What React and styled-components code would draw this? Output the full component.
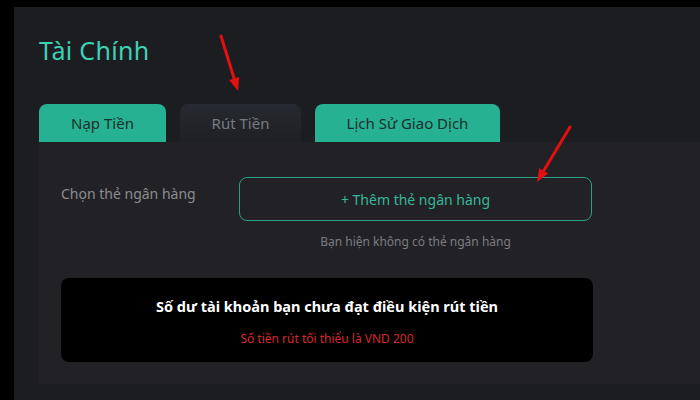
import React from "react"
import styled, { createGlobalStyle } from "styled-components"

const GlobalStyle = createGlobalStyle`
  html, body {
    margin: 0;
    padding: 0;
    background: #000;
  }
  body {
    font-family: "Noto Sans", "Open Sans", sans-serif;
  }
`

const Frame = styled.div`
  height: 400px;
  padding: 7px 0 0 14px;
  box-sizing: border-box;
  background: #000;
  overflow: hidden;
`

const Page = styled.div`
  position: relative;
  height: 100%;
  background: #1c1d21;
  padding: 27px 0 0 25px;
  box-sizing: border-box;
`

const Title = styled.h1`
  margin: 0;
  font-size: 25px;
  line-height: 32px;
  font-weight: 400;
  color: #3dd2b1;
  letter-spacing: 0.3px;
`

const Tabs = styled.div`
  display: flex;
  gap: 14px;
  margin-top: 38px;
`

const Tab = styled.div`
  width: ${(p) => p.$w}px;
  height: 38px;
  border-radius: 8px 8px 0 0;
  display: flex;
  align-items: center;
  justify-content: center;
  font-size: 15px;
  color: ${(p) => (p.$active ? "#777a7f" : "#1d2f2c")};
  background: ${(p) =>
    p.$active ? "linear-gradient(180deg, #262930 0%, #1f2024 100%)" : "#27b193"};
`

const Panel = styled.div`
  height: 242px;
  background: #222226;
  padding: 35px 0 0 22px;
  box-sizing: border-box;
`

const Row = styled.div`
  display: flex;
  align-items: flex-start;
`

const Label = styled.div`
  width: 178px;
  padding-top: 7px;
  font-size: 14px;
  color: #8b8c90;
`

const Field = styled.div`
  width: 353px;
  display: flex;
  flex-direction: column;
  align-items: center;
`

const AddButton = styled.button`
  width: 100%;
  height: 44px;
  border: 1.5px solid #2a9e86;
  border-radius: 8px;
  background: transparent;
  color: #36b899;
  font-family: inherit;
  font-size: 14px;
  cursor: pointer;
`

const Hint = styled.div`
  margin-top: 12px;
  font-size: 12px;
  color: #7c7d81;
`

const Notice = styled.div`
  width: 532px;
  height: 84px;
  margin-top: 28px;
  background: #000;
  border-radius: 8px;
  display: flex;
  flex-direction: column;
  align-items: center;
  padding-top: 17px;
  box-sizing: border-box;
`

const NoticeTitle = styled.div`
  font-size: 14.5px;
  font-weight: 700;
  color: #fff;
  line-height: 22px;
`

const NoticeSub = styled.div`
  margin-top: 13px;
  font-size: 12px;
  color: #d6282a;
`

const Arrow = styled.svg`
  position: absolute;
  left: ${(p) => p.$x}px;
  top: ${(p) => p.$y}px;
  overflow: visible;
`

const RedArrow = ({ x, y, x1, y1, x2, y2 }) => {
  const ang = Math.atan2(y2 - y1, x2 - x1)
  const len = 14
  const spread = 0.38
  const a = [x2 - len * Math.cos(ang - spread), y2 - len * Math.sin(ang - spread)]
  const b = [x2 - len * Math.cos(ang + spread), y2 - len * Math.sin(ang + spread)]
  const sx = x2 - (len - 3) * Math.cos(ang)
  const sy = y2 - (len - 3) * Math.sin(ang)
  return (
    <Arrow $x={x} $y={y} width="1" height="1">
      <line x1={x1} y1={y1} x2={sx} y2={sy} stroke="#e3100f" strokeWidth="3" strokeLinecap="round" />
      <polygon points={`${x2},${y2} ${a[0]},${a[1]} ${b[0]},${b[1]}`} fill="#e3100f" />
    </Arrow>
  )
}

export default function App() {
  return (
    <>
      <GlobalStyle />
      <Frame>
        <Page>
          <Title>Tài Chính</Title>
          <Tabs>
            <Tab $w={127}>Nạp Tiền</Tab>
            <Tab $w={121} $active>Rút Tiền</Tab>
            <Tab $w={185}>Lịch Sử Giao Dịch</Tab>
          </Tabs>
          <Panel>
            <Row>
              <Label>Chọn thẻ ngân hàng</Label>
              <Field>
                <AddButton>+ Thêm thẻ ngân hàng</AddButton>
                <Hint>Bạn hiện không có thẻ ngân hàng</Hint>
              </Field>
            </Row>
            <Notice>
              <NoticeTitle>Số dư tài khoản bạn chưa đạt điều kiện rút tiền</NoticeTitle>
              <NoticeSub>Số tiền rút tối thiểu là VND 200</NoticeSub>
            </Notice>
          </Panel>
          <RedArrow x={-14} y={-7} x1={221} y1={36} x2={238} y2={91} />
          <RedArrow x={-14} y={-7} x1={570} y1={127} x2={537} y2={182} />
        </Page>
      </Frame>
    </>
  )
}
